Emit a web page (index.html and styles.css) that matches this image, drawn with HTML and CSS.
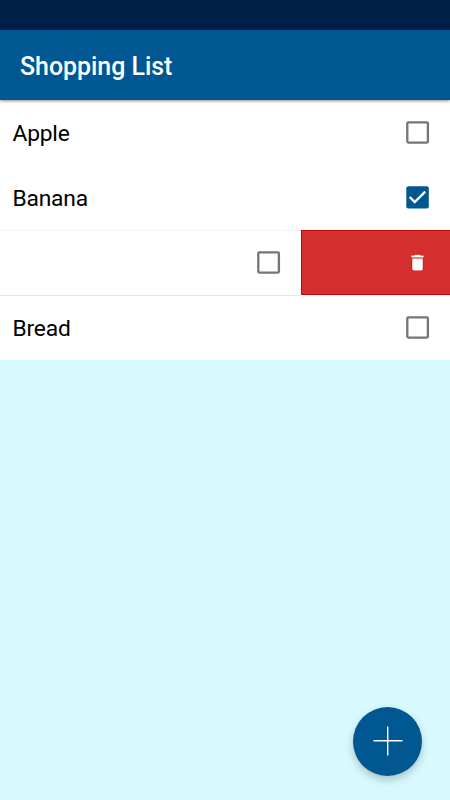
FILE: index.html
```html
<!DOCTYPE html>
<html lang="en">
<head>
<meta charset="utf-8">
<title>Shopping List</title>
<link rel="stylesheet" href="styles.css">
</head>
<body>
<div class="status"></div>
<header class="bar"><h1>Shopping List</h1></header>
<ul class="list">
  <li class="row"><span>Apple</span><svg class="check" viewBox="0 0 24 24"><rect class="box" x="1.300" y="2.300" width="20.600" height="20.300" rx="1"/></svg></li>
  <li class="row"><span>Banana</span><svg class="check" viewBox="0 0 24 24"><rect class="fill" x="0.300" y="1.200" width="22.500" height="22.300" rx="2"/><path class="tick" d="M3.700 12l5 5L19.200 6.700"/></svg></li>
  <li class="row swiped">
    <div class="slide"><svg class="check" viewBox="0 0 24 24"><rect class="box" x="1.300" y="2.300" width="20.600" height="20.300" rx="1"/></svg></div>
    <div class="delete"><svg class="trash" viewBox="0 0 24 24"><path d="M6 19c0 1.100.9 2 2 2h8c1.100 0 2-.9 2-2V7.500H6v11.500zM19 4h-3.500l-1-1h-5l-1 1H5v2.200h14V4z"/></svg></div>
  </li>
  <li class="row"><span>Bread</span><svg class="check" viewBox="0 0 24 24"><rect class="box" x="1.300" y="2.300" width="20.600" height="20.300" rx="1"/></svg></li>
</ul>
<button class="fab" aria-label="Add"><svg viewBox="0 0 30 30"><path d="M14.700 0.500v29M0.500 14.700h29"/></svg></button>
</body>
</html>
```
FILE: styles.css
```css
* { box-sizing: border-box; }
body { margin: 0; height: 800px; overflow: hidden; background: #d8faff; font-family: Roboto, sans-serif; color: #000; }
.status { height: 30px; background: #001f47; }
.bar { position: relative; height: 70px; padding: 2px 20px 0; display: flex; align-items: center; background: #005792; box-shadow: 0 1px 3px rgba(0,0,0,.45); }
h1 { margin: 0; font-size: 24.900px; font-weight: 500; color: #fff; }
.list { margin: 0; padding: 0; list-style: none; background: #fff; }
.row { height: 65px; padding: 0 20px 1px 12.500px; display: flex; align-items: center; justify-content: space-between; font-size: 22.800px; letter-spacing: -.2px; }
.row span { padding-top: 3px; }
.check { width: 24px; height: 24px; display: block; }
.box { fill: none; stroke: #757575; stroke-width: 2.3; }
.fill { fill: #005792; }
.tick { fill: none; stroke: #fff; stroke-width: 2.4; }
.swiped { padding: 0; }
.slide { width: 301px; height: 65px; padding: 0 20px 1px 0; display: flex; align-items: center; justify-content: flex-end; box-shadow: inset 0 1px #f2f2f2, 0 1px #e6e6e6; }
.delete { width: 149px; height: 65px; padding-right: 22px; display: flex; align-items: center; justify-content: flex-end; background: #d32f2f; border: solid #c80606; border-width: 1px 0 1px 1px; }
.trash { width: 21px; height: 21px; fill: #fff; stroke: #c80606; stroke-width: 1; paint-order: stroke; }
.fab { position: absolute; left: 353px; top: 706.500px; width: 69px; height: 69px; padding: 0; border: 0; border-radius: 50%; display: grid; place-items: center; background: #005792; box-shadow: 0 4px 8px rgba(0,0,0,.22); }
.fab svg { width: 30px; height: 30px; fill: none; stroke: #fff; stroke-width: 1.4; }
```
